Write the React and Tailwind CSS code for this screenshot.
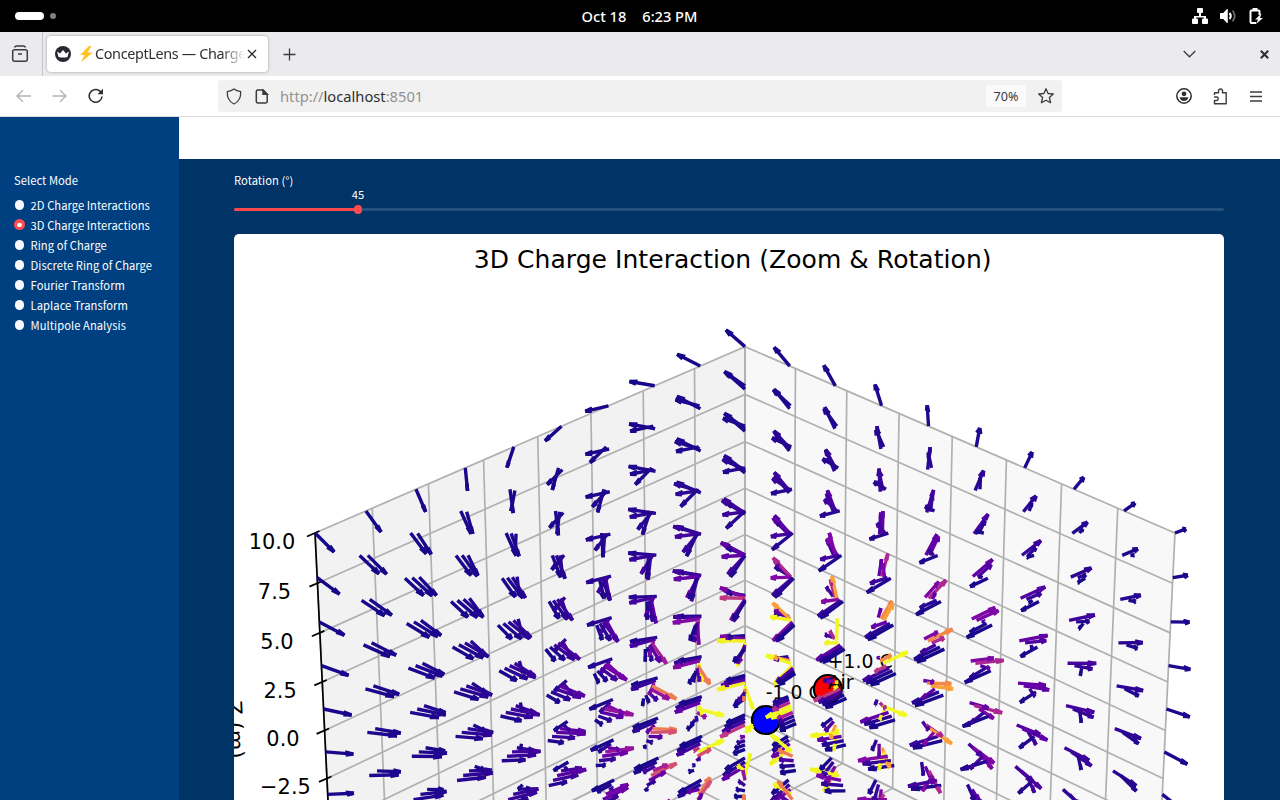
import React from 'react';

const modes = [
  '2D Charge Interactions',
  '3D Charge Interactions',
  'Ring of Charge',
  'Discrete Ring of Charge',
  'Fourier Transform',
  'Laplace Transform',
  'Multipole Analysis',
];

const charges = [
  { q: -1, pos: [-1, 0, 0] },
  { q: 1, pos: [-4, 0, 0] },
];

const PLASMA = [
  [13, 8, 135], [65, 4, 157], [106, 0, 168], [143, 13, 164], [177, 42, 144], [204, 71, 120],
  [225, 100, 98], [242, 132, 75], [252, 166, 54], [252, 206, 37], [240, 249, 33],
];

const COS15 = Math.cos(Math.PI / 12);
const SIN15 = Math.sin(Math.PI / 12);
const MAX_FIELD = 0.0555;

function plasma(t) {
  const f = Math.min(Math.max(t, 0), 1) * 10;
  const i = Math.min(Math.floor(f), 9);
  const c = PLASMA[i].map((a, k) => Math.round(a + (PLASMA[i + 1][k] - a) * (f - i)));
  return `rgb(${c[0]},${c[1]},${c[2]})`;
}

// Perspective camera: elevation 30, azimuth 45, box aspect 4:4:3.
// Chart coordinates start at the top left of the figure.
function project([x, y, z]) {
  const u = ((y - x) / 20) * 0.8418;
  const s = ((x + y) / 20) * 0.8418;
  const h = (z / 10) * 0.4464;
  const depth = 10 - (0.86603 * s + 0.5 * h);
  const v = -0.5 * s + 0.86603 * h;
  return [511 + (4994 * u) / depth, 496.5 - (4994 * v) / depth];
}

function field(p) {
  const e = [0, 0, 0];
  charges.forEach(({ q, pos }) => {
    const r = p.map((a, i) => a - pos[i]);
    const d = Math.hypot(...r);
    r.forEach((a, i) => { e[i] += (q * a) / d ** 3; });
  });
  return e;
}

function buildArrows() {
  const shafts = [];
  const heads = [];
  const at = (i) => -10 + (20 * i) / 9;
  for (let j = 0; j < 10; j++) {
    for (let i = 0; i < 10; i++) {
      for (let k = 0; k < 10; k++) {
        const p = [at(i), at(j), at(k)];
        const e = field(p);
        const m = Math.hypot(...e);
        const [a, b, c] = e.map((n) => n / m);
        const tip = [p[0] + a, p[1] + b, p[2] + c];
        const color = plasma(m / MAX_FIELD);
        const n = Math.hypot(a, b);
        const xp = n ? b / n : 0;
        const yp = n ? -a / n : 1;
        shafts.push({ from: tip, to: p, color });
        [1, -1].forEach((sign) => {
          const sn = SIN15 * sign;
          const cross = xp * yp * (1 - COS15);
          const d = [
            (COS15 + xp * xp * (1 - COS15)) * a + cross * b + yp * sn * c,
            cross * a + (COS15 + yp * yp * (1 - COS15)) * b - xp * sn * c,
            -yp * sn * a + xp * sn * b + COS15 * c,
          ];
          heads.push({ from: tip, to: tip.map((t, q) => t - 0.3 * d[q]), color });
        });
      }
    }
  }
  return [...shafts, ...heads];
}

const arrows = buildArrows();

const gridLines = [];
for (let t = -10; t <= 10; t += 2.5) {
  gridLines.push([[t, -10, 10], [t, -10, -10], [t, 10, -10]]);
  gridLines.push([[-10, t, 10], [-10, t, -10], [10, t, -10]]);
  gridLines.push([[10, -10, t], [-10, -10, t], [-10, 10, t]]);
}

const panes = [
  { fill: '#f8f8f8', pts: [[-10, -10, -10], [-10, 10, -10], [-10, 10, 10], [-10, -10, 10]] },
  { fill: '#f2f2f2', pts: [[-10, -10, -10], [10, -10, -10], [10, -10, 10], [-10, -10, 10]] },
  { fill: '#f5f5f5', pts: [[-10, -10, -10], [10, -10, -10], [10, 10, -10], [-10, 10, -10]] },
];

const ticks = [
  { z: 10, label: '10.0', x: 38, y: 307.5 },
  { z: 7.5, label: '7.5', x: 40.5, y: 357.5 },
  { z: 5, label: '5.0', x: 43, y: 407 },
  { z: 2.5, label: '2.5', x: 46.2, y: 456 },
  { z: 0, label: '0.0', x: 49, y: 504.5 },
  { z: -2.5, label: '−2.5', x: 51.5, y: 552.8 },
];

const toPoints = (pts) => pts.map((p) => project(p).map((n) => n.toFixed(2)).join(',')).join(' ');

function Segment({ from, to, color }) {
  const [x1, y1] = project(from);
  const [x2, y2] = project(to);
  return <line x1={x1} y1={y1} x2={x2} y2={y2} stroke={color} />;
}

function Charge({ pos, fill }) {
  const [cx, cy] = project(pos);
  return <circle cx={cx} cy={cy} r="14" fill={fill} stroke="#000" strokeWidth="2.1" />;
}

function FieldChart() {
  return (
    <svg className="block font-['DejaVu_Sans',sans-serif]" width="990" height="566" viewBox="0 0 990 566">
      <text x="498.7" y="34" textAnchor="middle" fontSize="25">3D Charge Interaction (Zoom &amp; Rotation)</text>
      {panes.map((pane) => (
        <polygon key={pane.fill} points={toPoints(pane.pts)} fill={pane.fill} />
      ))}
      <g fill="none" stroke="#b0b0b0" strokeWidth="1.7">
        {gridLines.map((pts, i) => (
          <polyline key={i} points={toPoints(pts)} />
        ))}
      </g>
      <g stroke="#000" strokeWidth="1.7" fill="none">
        <polyline points={toPoints([[10, -10, 10], [10, -10, -10]])} />
        {ticks.map(({ z }) => {
          const [x, y] = project([10, -10, z]);
          return <line key={z} x1={x - 8} y1={y + 3.4} x2={x + 4.5} y2={y - 2} />;
        })}
      </g>
      <g fontSize="20.9" textAnchor="middle">
        {ticks.map((t) => (
          <text key={t.z} x={t.x} y={t.y + 7.6}>{t.label}</text>
        ))}
        <text transform="translate(-6 496) rotate(87.5)">Z (m)</text>
      </g>
      <text x="531.700" y="465" fontSize="18.8">-1.0 C</text>
      <Charge pos={charges[1].pos} fill="#f00" />
      <Charge pos={charges[0].pos} fill="#00f" />
      <text x="593.700" y="434" fontSize="18.8">+1.0 C</text>
      <text x="593.700" y="455" fontSize="18.8">Air</text>
      <g strokeWidth="3.4">
        {arrows.map((a, i) => (
          <Segment key={i} {...a} />
        ))}
      </g>
    </svg>
  );
}

function SystemBar() {
  return (
    <div className="h-8 bg-black text-white flex items-center justify-between pl-[15px] pr-4">
      <div className="flex items-center gap-[6px] w-[72px]">
        <div className="w-[29px] h-2 rounded-full bg-white"></div>
        <div className="w-[6px] h-[6px] rounded-full bg-[#808080]"></div>
      </div>
      <div className="flex gap-4 text-[14.600px] font-medium leading-8 whitespace-nowrap">
        <span>Oct 18</span>
        <span>6:23 PM</span>
      </div>
      <div className="flex items-center justify-end gap-3 w-[72px]">
        <svg width="16" height="16" viewBox="0 0 16 16" fill="#fff">
          <rect x="5" y="0" width="6" height="5" rx="1" />
          <path d="M7 5h2v3h5v3h-2V9.500H4V11H2V8h5z" />
          <rect x="0" y="10.500" width="6" height="5.500" rx="1" />
          <rect x="10" y="10.500" width="6" height="5.500" rx="1" />
        </svg>
        <svg width="16" height="16" viewBox="0 0 16 16" fill="none">
          <path d="M0 5h3.200L7 1h.800v14H7l-3.800-4H0z" fill="#fff" />
          <path d="M9.500 5q2.500 3 0 6" stroke="#fff" strokeWidth="2" />
          <path d="M12.500 2.500q4.500 5.500 0 11" stroke="#666" strokeWidth="1.800" />
        </svg>
        <svg width="16" height="16" viewBox="0 0 16 16" fill="none">
          <path d="M11.500 7V3.500a1 1 0 0 0-1-1h-7a1 1 0 0 0-1 1v10.500a1 1 0 0 0 1 1H8" stroke="#fff" strokeWidth="2" />
          <path d="M4.500 0h5v2.500h-5z" fill="#fff" />
          <path d="M13.500 5.500L7 11.500h3l-2 4.500 7-6h-3z" fill="#fff" />
        </svg>
      </div>
    </div>
  );
}

function TabBar() {
  return (
    <div className="h-11 bg-[#ebebed] flex items-center text-[#2f2f33]">
      <div className="w-[43px] h-11 border-r border-[#c4c4c6] flex items-center justify-center">
        <svg className="ml-[-2px]" width="18" height="18" viewBox="0 0 18 18" fill="none" stroke="#3c3c40" strokeWidth="1.500">
          <path d="M3.500 2.500Q4 1 5.500 1h7Q14 1 14.500 2.500" />
          <rect x="1.700" y="4.700" width="14.600" height="11.500" rx="2" />
          <path d="M7 9h4" />
        </svg>
      </div>
      <div className="ml-1 w-[221px] h-9 rounded bg-white shadow-[0_0_3px_rgba(0,0,0,0.35)] flex items-center pl-2">
        <svg className="shrink-0" width="16" height="16" viewBox="0 0 16 16">
          <circle cx="8" cy="8" r="8" fill="#262730" />
          <path d="M2 5.500l3 2L8 4l3 3.500 3-2-1.500 5.500q-4.500 1-9 0z" fill="#fff" />
        </svg>
        <svg className="ml-2 shrink-0" width="15" height="16" viewBox="0 0 15 16">
          <path d="M10 0L1 9h4.500L2 16 14 6.500H8.500L12.500 0z" fill="#ffc225" />
        </svg>
        <div className="w-[150px] ml-px shrink-0 overflow-hidden whitespace-nowrap text-[14.4px] tracking-[-0.35px] [mask-image:linear-gradient(to_right,black_84%,transparent)]">
          ConceptLens — Charge
        </div>
        <svg className="shrink-0 ml-[2px]" width="10" height="10" viewBox="0 0 10 10" stroke="#2f2f33" strokeWidth="1.400">
          <path d="M1 1l8 8M9 1l-8 8" />
        </svg>
      </div>
      <svg className="ml-[15px]" width="13" height="13" viewBox="0 0 13 13" stroke="#3c3c40" strokeWidth="1.300">
        <path d="M6.500 0.500v12M0.500 6.500h12" />
      </svg>
      <svg className="ml-auto" width="13" height="8" viewBox="0 0 13 8" fill="none" stroke="#3c3c40" strokeWidth="1.300">
        <path d="M0.700 1l5.800 5.800L12.300 1" />
      </svg>
      <svg className="ml-16 mr-[11px]" width="9" height="9" viewBox="0 0 9 9" stroke="#2f2f33" strokeWidth="2.100">
        <path d="M0.800 0.800l7.400 7.400M8.200 0.800L0.800 8.200" />
      </svg>
    </div>
  );
}

function Toolbar() {
  return (
    <div className="h-[41px] bg-white border-b border-[#dcdcdf] flex items-center">
      <div className="flex items-center pl-[16px] gap-[21px] w-[218px]">
        <svg width="15" height="14" viewBox="0 0 15 14" fill="none" stroke="#b3b3b5" strokeWidth="1.300">
          <path d="M15 7H1M7 1.200L1 7l6 5.800" />
        </svg>
        <svg width="15" height="14" viewBox="0 0 15 14" fill="none" stroke="#b3b3b5" strokeWidth="1.300">
          <path d="M0.500 7H14M8 1.200L14 7l-6 5.800" />
        </svg>
        <svg width="16" height="16" viewBox="0 0 16 16" fill="none" stroke="#2f2f33" strokeWidth="1.600">
          <path d="M14 8.500A6.400 6.400 0 1 1 11.500 2.800L13 4.200" />
          <path d="M15 0.800V6.300H9.500z" fill="#2f2f33" stroke="none" />
        </svg>
      </div>
      <div className="w-[844px] h-8 rounded bg-[#f1f1f1] flex items-center pl-2 pr-2">
        <svg width="16" height="17" viewBox="0 0 16 17" fill="none" stroke="#3c3c40" strokeWidth="1.300">
          <path d="M8 1Q10.500 3 14.700 3.600Q15.200 12.500 8 16Q0.800 12.500 1.300 3.600Q5.500 3 8 1z" strokeLinejoin="round" />
        </svg>
        <svg className="ml-[13px]" width="14" height="15" viewBox="0 0 14 15" fill="none" stroke="#3c3c40" strokeWidth="1.500">
          <path d="M2.800 1H8l4.200 4.200v7.300a1.500 1.500 0 0 1-1.500 1.500H2.800a1.500 1.500 0 0 1-1.500-1.500v-10A1.500 1.500 0 0 1 2.800 1z" />
          <path d="M8 1v4.200h4.200z" fill="#3c3c40" />
        </svg>
        <div className="ml-[11px] text-[14.7px] text-[#929294]">
          http://<span className="text-[#2f2f33]">localhost</span>:8501
        </div>
        <div className="ml-auto w-10 h-[22px] rounded-[3px] bg-[#fafafa] text-[12.6px] leading-[23px] text-center text-[#3c3c40]">70%</div>
        <svg className="ml-3" width="16" height="16" viewBox="0 0 16 16" fill="none" stroke="#3c3c40" strokeWidth="1.300" strokeLinejoin="round">
          <path d="M8 0.800l2.100 4.700 5.200.5-3.900 3.500 1.200 5.300L8 12.200l-4.600 2.600 1.200-5.300L.7 6l5.200-.5z" />
        </svg>
      </div>
      <div className="ml-auto mr-[18px] flex items-center">
        <svg width="16" height="16" viewBox="0 0 16 16" fill="none">
          <circle cx="8" cy="8" r="7.200" stroke="#2f2f33" strokeWidth="1.500" />
          <circle cx="8" cy="5.800" r="2.400" fill="#2f2f33" />
          <path d="M3.500 9.300h9q-1 3.700-4.500 3.700t-4.500-3.700z" fill="#2f2f33" />
        </svg>
        <svg className="ml-[21px]" width="15" height="17" viewBox="0 0 15 17" fill="none" stroke="#3c3c40" strokeWidth="1.400" strokeLinejoin="round">
          <path d="M1.500 7V4.800h4V3a2 2 0 0 1 4 0v1.800h3.700v11H1.500V12.500H3.500a1.700 1.700 0 0 0 0-3.500H1" />
        </svg>
        <svg className="ml-[22px]" width="12" height="11" viewBox="0 0 12 11" stroke="#3c3c40" strokeWidth="1.300">
          <path d="M0 1h12M0 5.500h12M0 10h12" />
        </svg>
      </div>
    </div>
  );
}

function Sidebar() {
  return (
    <aside className="w-[179px] shrink-0 bg-[#004080] pl-[14px] pt-[53px] text-white">
      <div className="leading-5">Select Mode</div>
      <div className="mt-[5px]">
        {modes.map((mode, index) => (
          <label key={mode} className="h-5 flex items-center whitespace-nowrap">
            {index === 1 ? (
              <span className="w-[11px] h-[11px] mt-[-1px] rounded-full bg-[#ff4b4b] flex items-center justify-center">
                <span className="w-[5px] h-1 rounded-full bg-white"></span>
              </span>
            ) : (
              <span className="w-[9px] h-[10px] mx-px rounded-full bg-[#fafafc]"></span>
            )}
            <span className="ml-[5.6px] leading-5">{mode}</span>
          </label>
        ))}
      </div>
    </aside>
  );
}

function Main() {
  return (
    <main className="flex-1 bg-[#003366] text-white">
      <div className="h-[42px] bg-white"></div>
      <div className="pl-[55px] pr-14 pt-[11px]">
        <div className="leading-5">Rotation (°)</div>
        <div className="relative h-11 mt-[5px]">
          <div className="absolute left-[109px] w-[30px] top-[-11px] text-center leading-5">45</div>
          <div className="absolute left-0 right-0 top-[13px] h-[3px] rounded-full bg-[#26507c]"></div>
          <div className="absolute left-0 w-[124px] top-[13px] h-[3px] rounded-full bg-[#ff4b4b]"></div>
          <div className="absolute left-[120px] top-[10px] w-2 h-[9px] rounded-full bg-[#ff4b4b]"></div>
        </div>
        <div className="mt-[-5px] h-[566px] rounded-t-[5px] bg-white overflow-hidden">
          <FieldChart />
        </div>
      </div>
    </main>
  );
}

export default function App() {
  return (
    <div className="w-[1280px] h-[800px] overflow-hidden flex flex-col font-['Noto_Sans',sans-serif]">
      <SystemBar />
      <TabBar />
      <Toolbar />
      <div className="flex flex-1 min-h-0 text-[11.2px] tracking-[0.05px] font-['Noto_Sans_CJK_SC',sans-serif]">
        <Sidebar />
        <Main />
      </div>
    </div>
  );
}
